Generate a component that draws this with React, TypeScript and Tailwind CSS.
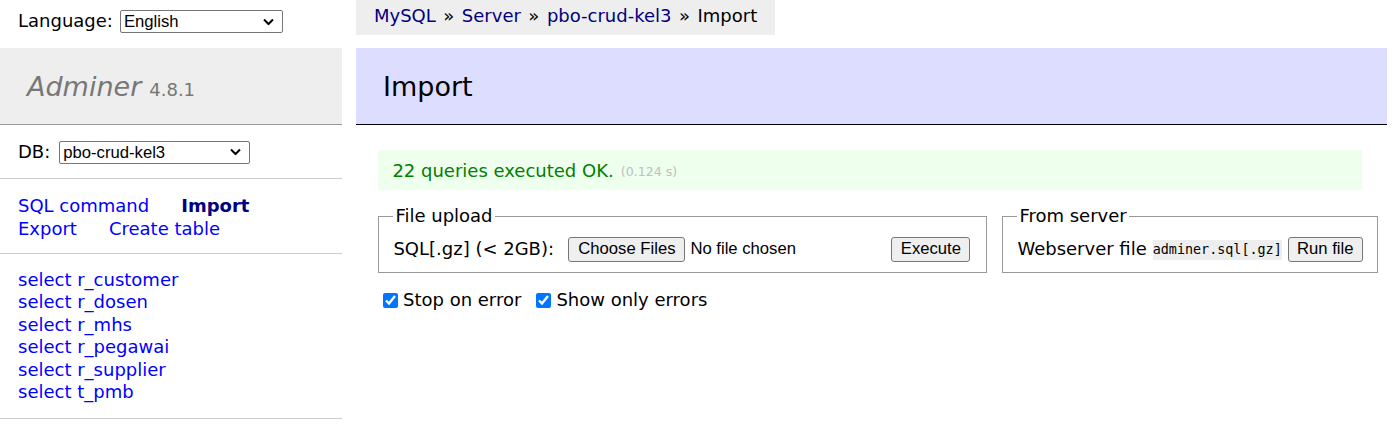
import React from "react";

const TABLES = ["r_customer", "r_dosen", "r_mhs", "r_pegawai", "r_supplier", "t_pmb"];

const Chevron = () => (
  <svg width="11" height="7" viewBox="0 0 11 7" className="pointer-events-none absolute right-[9px] top-1/2 -translate-y-1/2">
    <polyline points="1,1 5.5,5.5 10,1" fill="none" stroke="#000" strokeWidth="2" />
  </svg>
);

const FakeSelect = ({ value, width }: { value: string; width: string }) => (
  <div className={`relative h-[23px] ${width}`}>
    <select
      defaultValue={value}
      className="h-full w-full appearance-none rounded-[2px] border border-[#767676] bg-white pl-[3px] font-['Liberation_Sans',Arial,sans-serif] text-[16.67px] leading-[21px] text-black outline-none"
    >
      <option>{value}</option>
    </select>
    <Chevron />
  </div>
);

const Btn = ({ label, width }: { label: string; width: string }) => (
  <button
    type="button"
    className={`flex h-[25px] ${width} shrink-0 items-center justify-center rounded-[3px] border border-[#767676] bg-[#efefef] font-['Liberation_Sans',Arial,sans-serif] text-[16.67px] text-black`}
  >
    {label}
  </button>
);

const Sep = () => <span className="px-[7.5px]">»</span>;

export default function App() {
  return (
    <div className="flex w-[1387px] bg-white font-['DejaVu_Sans',Verdana,sans-serif] text-[18px] leading-[22.5px] text-black">
      {/* menu */}
      <aside className="w-[342px] shrink-0">
        <div className="flex h-[48px] items-start px-[18px] pt-[10px]">
          <div className="flex h-[23px] items-center gap-[7px]">
            <span>Language:</span>
            <FakeSelect value="English" width="w-[163px]" />
          </div>
        </div>

        <h1 className="flex h-[77px] items-center border-b border-[#999] bg-[#eee] px-[27px] pt-[2px] text-[27px] leading-[34px] text-[#777]">
          <span className="italic">Adminer</span>
          <span className="ml-[8px] mt-[5px] text-[18px]">4.8.1</span>
        </h1>

        <div className="flex items-center gap-[9px] border-b border-[#ccc] px-[18px] pb-[14px] pt-[15.5px]">
          <span>DB:</span>
          <FakeSelect value="pbo-crud-kel3" width="w-[191px]" />
        </div>

        <div className="border-b border-[#ccc] px-[18px] pb-[12.8px] pt-[16.8px]">
          <div className="flex gap-[32px]">
            <a className="text-[#00f]">SQL command</a>
            <a className="font-bold text-[#000080]">Import</a>
          </div>
          <div className="flex gap-[32px]">
            <a className="text-[#00f]">Export</a>
            <a className="text-[#00f]">Create table</a>
          </div>
        </div>

        <ul className="border-b border-[#ccc] px-[18px] pb-[14px] pt-[14.8px]">
          {TABLES.map((t) => (
            <li key={t}>
              <a className="text-[#00f]">select {t}</a>
            </li>
          ))}
        </ul>
      </aside>

      {/* content */}
      <main className="ml-[14px] min-w-0 flex-1">
        <div className="inline-flex h-[35px] items-center whitespace-nowrap bg-[#eee] px-[18px] pb-[3px]">
          <a className="text-[#000080]">MySQL</a>
          <Sep />
          <a className="text-[#000080]">Server</a>
          <Sep />
          <a className="text-[#000080]">pbo-crud-kel3</a>
          <Sep />
          <span>Import</span>
        </div>

        <h2 className="mt-[13px] flex h-[77px] items-center border-b border-black bg-[#ddf] px-[27px] pt-[2px] text-[27px] leading-[34px]">
          Import
        </h2>

        <div className="pl-[22px] pr-[25px]">
          <div className="mt-[25px] flex h-[40px] items-center gap-[7px] bg-[#efe] px-[14.4px] pt-[2px] text-[#008000]">
            <span>22 queries executed OK.</span>
            <span className="mt-[2px] text-[12.6px] text-[#c0c0c0]">(0.124 s)</span>
          </div>

          <div className="mt-[15px] flex items-start gap-[15px]">
            <fieldset className="w-[609px] shrink-0 border border-[#999] px-[14.4px] pb-[9px]">
              <legend className="px-[2px]">File upload</legend>
              <div className="mt-[9px] flex h-[26px] items-center whitespace-nowrap">
                <span className="w-[175px] shrink-0">SQL[.gz] (&lt; 2GB):</span>
                <div className="flex w-[323px] shrink-0 items-center gap-[5px]">
                  <Btn label="Choose Files" width="w-[117px]" />
                  <span className="font-['Liberation_Sans',Arial,sans-serif] text-[16.67px]">No file chosen</span>
                </div>
                <Btn label="Execute" width="w-[79px]" />
              </div>
            </fieldset>

            <fieldset className="w-[375px] shrink-0 border border-[#999] px-[14.4px] pb-[9px]">
              <legend className="px-[2px]">From server</legend>
              <div className="mt-[9px] flex h-[26px] items-center whitespace-nowrap">
                <span>Webserver file</span>
                <code className="ml-[6px] bg-[#eee] font-['DejaVu_Sans_Mono',monospace] text-[13.4px] leading-[20px]">
                  adminer.sql[.gz]
                </code>
                <span className="ml-[6px]">
                  <Btn label="Run file" width="w-[75px]" />
                </span>
              </div>
            </fieldset>
          </div>

          <div className="mt-[17px] flex h-[22px] items-center whitespace-nowrap">
            <label className="flex items-center">
              <input type="checkbox" defaultChecked className="ml-[5px] mr-[5px] h-[15px] w-[15px] accent-[#0075ff]" />
              <span>Stop on error</span>
            </label>
            <label className="ml-[12px] flex items-center">
              <input type="checkbox" defaultChecked className="ml-[3px] mr-[5px] h-[15px] w-[15px] accent-[#0075ff]" />
              <span>Show only errors</span>
            </label>
          </div>
        </div>
      </main>
    </div>
  );
}
